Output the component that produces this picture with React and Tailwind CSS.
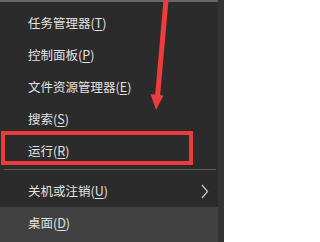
import React from "react";

const items = [
  { label: "任务管理器", key: "T" },
  { label: "控制面板", key: "P" },
  { label: "文件资源管理器", key: "E" },
  { label: "搜索", key: "S" },
  { label: "运行", key: "R" },
];

const MenuRow = ({ label, hotkey, active, arrow }) => (
  <div
    className={`flex items-center h-[32px] pl-[28px] pr-[9px] text-[12.5px] text-[#e2e2e2] ${
      active ? "bg-[#414141]" : ""
    }`}
  >
    <span className="flex-1">
      {label}(<span className="underline underline-offset-2">{hotkey}</span>)
    </span>
    {arrow && (
      <svg width="8" height="15" viewBox="0 0 8 15" className="text-[#c8c8c8]">
        <polyline points="1,1 6.5,7.5 1,14" fill="none" stroke="currentColor" strokeWidth="1.2" />
      </svg>
    )}
  </div>
);

export default function App() {
  return (
    <div className="relative w-[224px] h-[242px] overflow-hidden flex bg-[#2b2b2b] font-['Noto_Sans_CJK_SC','Noto_Sans',sans-serif]">
      <div className="w-[218px] flex flex-col">
        <div className="h-[2px] bg-[#666]" />
        <div className="pt-[5px]">
          {items.map((it) => (
            <MenuRow key={it.key} label={it.label} hotkey={it.key} />
          ))}
        </div>
        <div className="mt-[2px] mb-[5px] ml-[4px] mr-[2px] h-px bg-[#5a5a5a]" />
        <MenuRow label="关机或注销" hotkey="U" arrow />
        <div className="flex-1 bg-[#414141]">
          <MenuRow label="桌面" hotkey="D" active />
        </div>
      </div>
      <div className="flex-1 bg-[#333]" />

      {/* red annotation box */}
      <div className="absolute left-[1px] top-[131px] w-[192px] h-[34px] border-[4px] border-[#ef3b3b]" />

      {/* red annotation arrow */}
      <svg className="absolute left-0 top-0" width="224" height="242" viewBox="0 0 224 242">
        <line x1="166" y1="0" x2="157.5" y2="97" stroke="#ef3b3b" strokeWidth="5" />
        <polygon points="150.5,94 163.5,95.5 156,110" fill="#ef3b3b" />
      </svg>
    </div>
  );
}
